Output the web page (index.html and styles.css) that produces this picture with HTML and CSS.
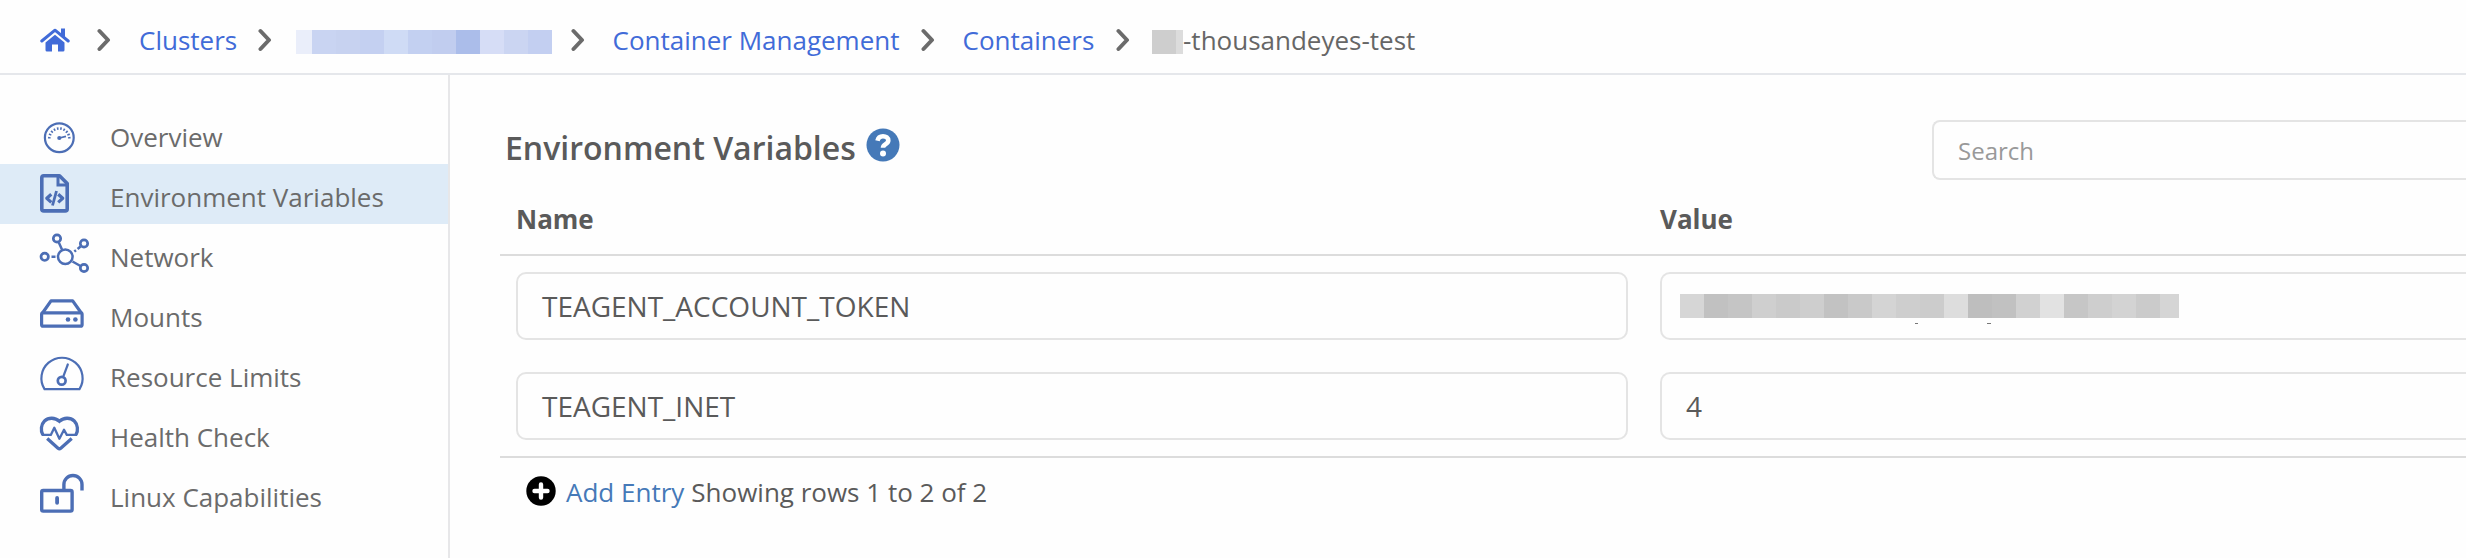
FILE: index.html
```html
<!DOCTYPE html>
<html lang="en">
<head>
<meta charset="utf-8">
<title>Environment Variables</title>
<link rel="stylesheet" href="styles.css">
</head>
<body>
<nav class="breadcrumb">
  <svg class="home" viewBox="0 0 30 24"><path d="M1.800 13 15 2.200 28.200 13" fill="none" stroke="currentColor" stroke-width="3" stroke-linecap="round" stroke-linejoin="round"/><path d="M21 0.500h4v9l-4-3.500z"/><path d="M5.500 14.500 15 6.800l9.500 7.700V22a1.500 1.500 0 0 1-1.500 1.500h-5v-7h-6v7H7A1.500 1.500 0 0 1 5.500 22z"/></svg>
  <svg class="chev chev-1" viewBox="0 0 14 24"><path d="M2.500 3 11 12l-8.500 9"/></svg>
  <a class="crumb-clusters">Clusters</a>
  <svg class="chev chev-2" viewBox="0 0 14 24"><path d="M2.500 3 11 12l-8.500 9"/></svg>
  <span class="mosaic mosaic-blue"></span>
  <svg class="chev chev-3" viewBox="0 0 14 24"><path d="M2.500 3 11 12l-8.500 9"/></svg>
  <a class="crumb-cm">Container Management</a>
  <svg class="chev chev-4" viewBox="0 0 14 24"><path d="M2.500 3 11 12l-8.500 9"/></svg>
  <a class="crumb-containers">Containers</a>
  <svg class="chev chev-5" viewBox="0 0 14 24"><path d="M2.500 3 11 12l-8.500 9"/></svg>
  <span class="mosaic mosaic-small"></span><span class="current">-thousandeyes-test</span>
</nav>
<div class="layout">
  <aside class="sidebar">
    <a class="item"><svg class="icon" viewBox="0 0 60 60"><g stroke-width="2.200"><circle cx="27.300" cy="33.700" r="14.400"/><path d="M17.300 34.500A10 10 0 1 1 37.300 34.500" stroke-width="2.600" stroke-dasharray="1.600 1.700"/><path d="M27.300 34 34 32.300" stroke-width="1.800"/></g><circle class="solid" cx="27.300" cy="34" r="2.100"/></svg><span>Overview</span></a>
    <a class="item active"><svg class="icon" viewBox="0 0 60 60"><g stroke-width="3.600" stroke-linejoin="round"><path d="M11.800 11.800H27.500L35.200 19.500V44.900a2 2 0 0 1-2 2H11.800a2 2 0 0 1-2-2V13.800a2 2 0 0 1 2-2z"/><path d="M26 12V21H35" stroke-width="3" stroke-linejoin="miter"/><path d="M19.300 30.200 14.800 34.300 19.300 38.400M26.200 30.200 30.700 34.300 26.200 38.400" stroke-width="3.200"/><path d="M24.500 27 20.500 41.500" stroke-width="2.800"/></g></svg><span>Environment Variables</span></a>
    <a class="item"><svg class="icon" viewBox="0 0 60 60"><g stroke-width="2.500"><circle cx="33.300" cy="32.700" r="7.300"/><g stroke-width="2.700"><circle cx="25" cy="14.500" r="3.700"/><circle cx="52" cy="19.500" r="3.700"/><circle cx="12.700" cy="32.800" r="3.700"/><circle cx="52" cy="44" r="3.700"/></g><path d="M26.800 18.500 30.200 26M40.500 37.500 48.500 42M19.500 32.700H23.500M42.300 27.600 44 26.300M45.600 25 48.500 22.500"/></g></svg><span>Network</span></a>
    <a class="item"><svg class="icon" viewBox="0 0 60 60"><g stroke-width="3.200" stroke-linejoin="round"><rect x="9.600" y="28.900" width="40.500" height="13.300" rx="1.500"/><path d="M10.500 29 19 16.800H40.700L49.300 29"/></g><circle class="solid" cx="36" cy="35.500" r="2.300"/><circle class="solid" cx="43.400" cy="35.500" r="2.300"/></svg><span>Mounts</span></a>
    <a class="item"><svg class="icon" viewBox="0 0 60 60"><g stroke-width="2.200" stroke-linejoin="round"><path d="M12.500 45.200A20.600 20.600 0 1 1 47.500 45.200Z"/><circle cx="29.700" cy="36.700" r="3.900" stroke-width="2.700"/><path d="M31.200 32.800 35.800 20.500" stroke-linecap="round"/></g></svg><span>Resource Limits</span></a>
    <a class="item"><svg class="icon" viewBox="0 0 60 60"><g stroke-width="3.300"><path d="M10.800 30.800C8.400 26.500 9 20.500 12.500 17 16.500 13.300 23 13.300 27.400 17.300 31.800 13.300 38.300 13.300 42.300 17 45.800 20.500 46.400 26.500 44 30.800"/><path d="M15.200 34.500 26 44.200Q27.400 45.300 28.800 44.200L39.700 34.500"/><path d="M9.800 30.900H18.800L22.300 23.800 27.400 34.800 32 25.700 34.800 30.900H45" stroke-width="2.300" stroke-linejoin="round"/></g></svg><span>Health Check</span></a>
    <a class="item"><svg class="icon" viewBox="0 0 60 60"><g stroke-width="3.400"><rect x="9.700" y="26.500" width="30.400" height="20.600" rx="1.500"/><path d="M31.900 26V20.500A9 9 0 0 1 50 20.500V26.500"/></g><rect class="solid" x="23.200" y="32" width="3.800" height="8.700" rx="1.900"/></svg><span>Linux Capabilities</span></a>
  </aside>
  <main class="main">
    <header class="head">
      <h1>Environment Variables</h1>
      <svg class="help" viewBox="0 0 34 34"><circle cx="17" cy="17" r="16.500" fill="#4579b8"/><path d="M11.500 12.800C12.200 9.500 14.200 8.300 17 8.300c3 0 5.300 1.500 5.300 4.300 0 3.600-5.300 3.600-5.300 7.200" fill="none" stroke="#fff" stroke-width="4.600"/><circle cx="17" cy="25.500" r="3" fill="#fff"/></svg>
      <div class="search">Search</div>
    </header>
    <div class="grid titles"><div>Name</div><div>Value</div></div>
    <div class="rows">
      <div class="grid"><div class="field">TEAGENT_ACCOUNT_TOKEN</div><div class="field value token"><span class="mosaic mosaic-gray"></span></div></div>
      <div class="grid"><div class="field">TEAGENT_INET</div><div class="field value">4</div></div>
    </div>
    <footer class="foot">
      <svg class="plus" viewBox="0 0 30 30"><circle cx="15" cy="15" r="14.700"/><path d="M15 8.500V21.500M8.500 15H21.500" stroke="#fff" stroke-width="4.400" stroke-linecap="round"/></svg>
      <a class="add">Add Entry</a><span>Showing rows 1 to 2 of 2</span>
    </footer>
  </main>
</div>
</body>
</html>
```

FILE: styles.css
```css
* { box-sizing: border-box; }
body {
  margin: 0;
  width: 2466px;
  height: 558px;
  overflow: hidden;
  background: #fefefe;
  color: #5a5a5a;
  font: 26px/36px "Open Sans", "Noto Sans", sans-serif;
  display: flex;
  flex-direction: column;
}
svg { display: block; flex: none; }

/* Breadcrumb */
.breadcrumb {
  height: 75px;
  flex: none;
  border-bottom: 2px solid #e5e7eb;
  display: flex;
  align-items: flex-start;
  padding: 22px 0 0 40px;
  color: #666;
  white-space: nowrap;
}
.breadcrumb a { color: #416bd8; flex: none; }
.home { width: 30px; height: 24px; margin-top: 6px; fill: #416bd8; color: #416bd8; }
.chev { width: 14px; height: 24px; margin-top: 6px; fill: none; stroke: #6b6b6b; stroke-width: 4; stroke-linecap: round; stroke-linejoin: round; }
.chev-1 { margin-left: 27px; }
.crumb-clusters { width: 98px; margin-left: 28px; }
.chev-2 { margin-left: 21px; }
.chev-3 { margin-left: 19px; }
.crumb-cm { width: 287px; margin-left: 27.5px; }
.chev-4 { margin-left: 21.5px; }
.crumb-containers { width: 132px; margin-left: 27.5px; }
.chev-5 { margin-left: 21.5px; }

/* Masked values */
.mosaic { height: 24px; flex: none; }
.mosaic-blue {
  width: 256px;
  margin: 8px 0 0 24px;
  background: linear-gradient(90deg, #eaeefa 16px, #c9d4f2 16px 40px, #c7d2f0 40px 64px, #c4d0f1 64px 88px, #cfdbf5 88px 112px, #c3d0f1 112px 136px, #c1cdef 136px 160px, #abbdea 160px 184px, #d6ddf6 184px 208px, #cbd5f2 208px 232px, #c3cff1 232px);
}
.mosaic-small {
  width: 31px;
  margin: 8px 0 0 22px;
  background: linear-gradient(90deg, #cecece 24px, #dcdcdc 24px);
}
.mosaic-gray {
  width: 499px;
  background: linear-gradient(90deg, #d6d6d6 24px, #c1c1c1 24px 48px, #c5c5c5 48px 72px, #cfcfcf 72px 96px, #cacaca 96px 120px, #cecece 120px 144px, #c2c2c2 144px 168px, #c9c9c9 168px 192px, #d4d4d4 192px 216px, #cecece 216px 240px, #cccccc 240px 264px, #dddddd 264px 288px, #bebebe 288px 312px, #c1c1c1 312px 336px, #d1d1d1 336px 360px, #e2e2e2 360px 384px, #c6c6c6 384px 408px, #cecece 408px 432px, #d3d3d3 432px 456px, #cbcbcb 456px 480px, #d5d5d5 480px);
}

.layout { flex: 1; display: flex; min-height: 0; }

/* Sidebar */
.sidebar {
  width: 450px;
  flex: none;
  border-right: 2px solid #e7e7e9;
  padding-top: 29px;
  color: #6b6b6b;
}
.item { height: 60px; display: flex; padding-left: 32px; }
.item span { margin: 15px 0 0 18px; }
.item.active { background: #deebf7; }
.icon { width: 60px; height: 60px; fill: none; stroke: #4c6eb5; }
.solid { fill: #4c6eb5; stroke: none; }

/* Main table */
.main { flex: 1; padding-left: 50px; min-width: 0; }
.head { height: 105px; display: flex; align-items: flex-start; }
h1 { margin: 51px 0 0 5px; width: 350px; font-size: 32px; line-height: 44px; font-weight: 600; white-space: nowrap; }
.help { width: 34px; height: 34px; margin: 53px 0 0 11px; }
.search {
  width: 534px;
  height: 60px;
  margin: 45px 0 0 auto;
  border: 2px solid #e4e4e4;
  border-right: 0;
  border-radius: 8px 0 0 8px;
  padding: 11px 24px;
  font-size: 24px;
  color: #999;
}
.grid { display: grid; grid-template-columns: 1112px 1fr; column-gap: 32px; padding-left: 16px; }
.titles { height: 76px; padding-top: 21px; font-weight: 700; border-bottom: 2px solid #dcdcdc; }
.rows { display: grid; row-gap: 32px; padding: 16px 0; border-bottom: 2px solid #dcdcdc; }
.field {
  height: 68px;
  border: 2px solid #e4e4e4;
  border-radius: 10px;
  padding: 0 24px;
  font-size: 28px;
  line-height: 64px;
}
.value { border-right: 0; border-radius: 10px 0 0 10px; }
.token {
  padding: 20px 18px;
  background: linear-gradient(#777, #777) 253px 49px / 3px 1px no-repeat, linear-gradient(#777, #777) 325px 49px / 4px 1px no-repeat;
}
.token .mosaic { display: block; }
.foot { display: flex; padding: 16px 0 0 26px; }
.plus { width: 30px; height: 30px; margin-top: 2px; }
.foot a { color: #4579b8; margin: 0 7px 0 10px; }
```
